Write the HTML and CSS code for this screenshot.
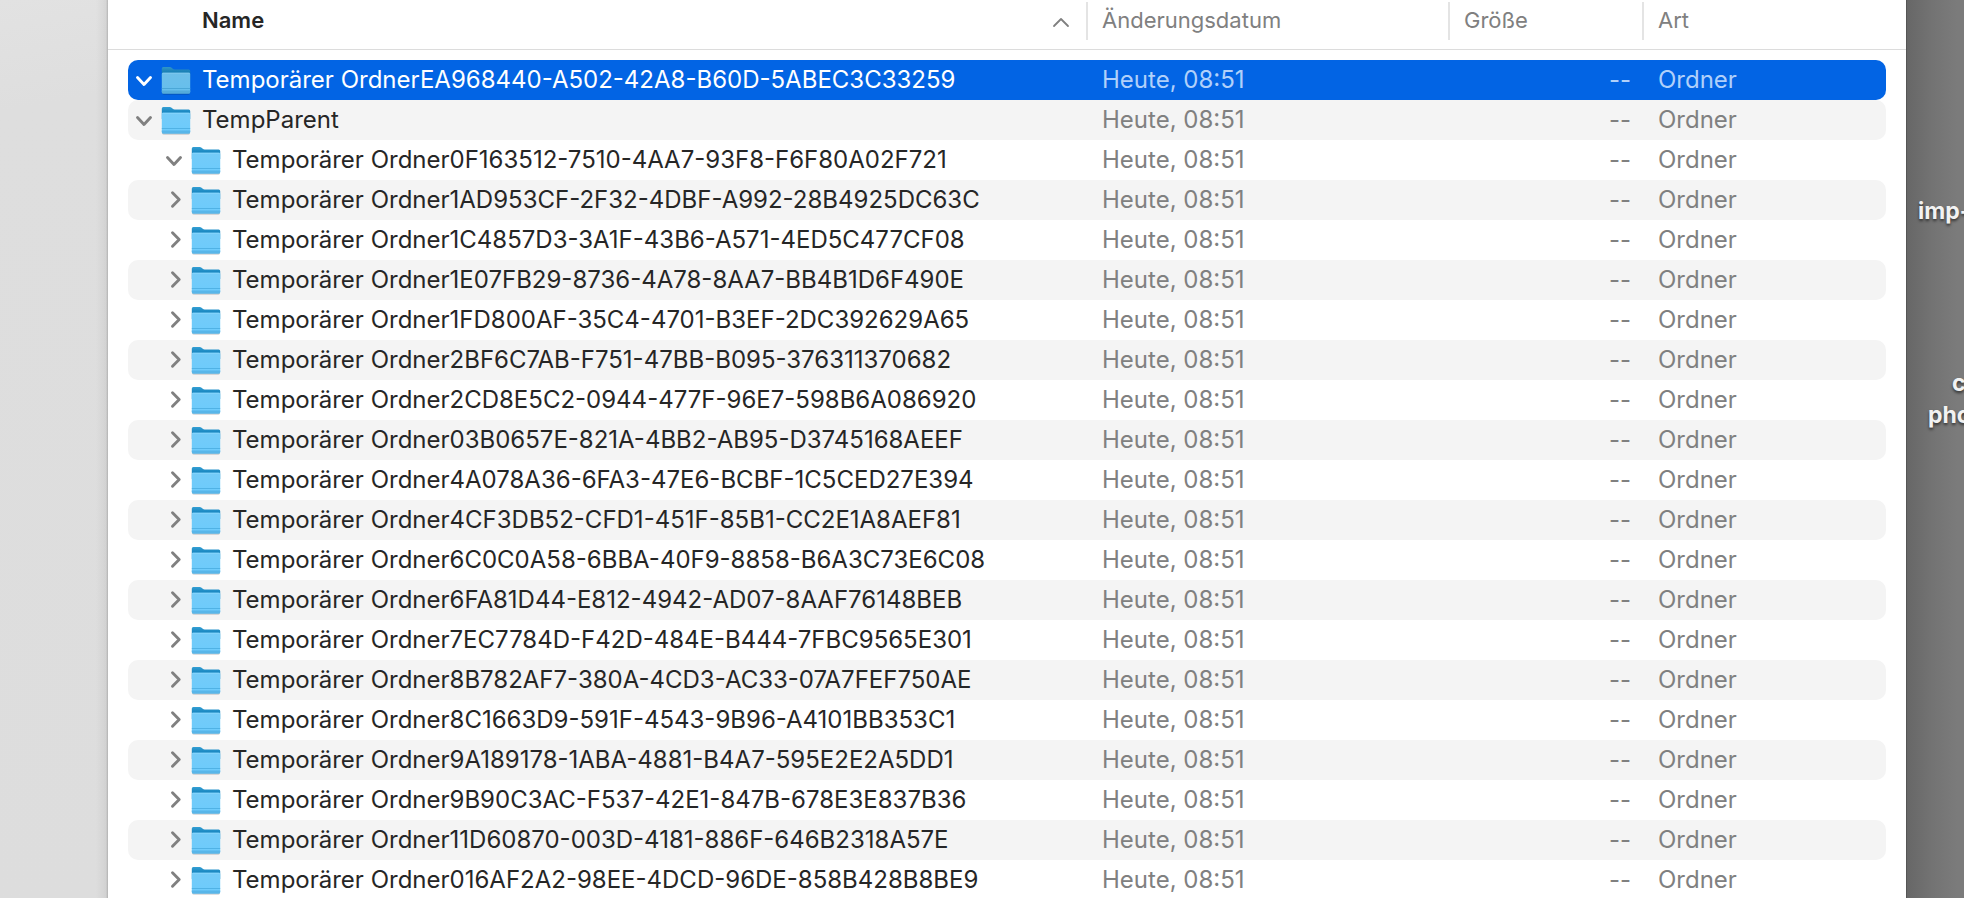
FILE: index.html
```html
<!DOCTYPE html>
<html lang="de">
<head>
  <meta charset="UTF-8">
  <meta name="viewport" content="width=device-width, initial-scale=1.0">
  <title>TempParent</title>
  <link rel="stylesheet" href="styles.css">
</head>
<body>
  <!-- shared icons -->
  <svg class="sprite" aria-hidden="true">
    <defs>
      <linearGradient id="folder-front" x1="0" y1="0" x2="0" y2="1">
        <stop offset="0" stop-color="#74cbf8"/>
        <stop offset="1" stop-color="#6ccbfc"/>
      </linearGradient>
      <linearGradient id="folder-back" x1="0" y1="0" x2="0" y2="1">
        <stop offset="0" stop-color="#349fd4"/>
        <stop offset=".5" stop-color="#1583bd"/>
      </linearGradient>
    </defs>
    <symbol id="folder" viewBox="0 0 30 30">
      <path d="M1.200 27h27.600v1a1.500 1.500 0 0 1-1.500 1.500H2.700A1.500 1.500 0 0 1 1.200 28z" fill="#000" opacity=".25"/>
      <path d="M.8 3.500A1.500 1.500 0 0 1 2.300 2h6.400c.8 0 1.300.3 1.900.8l1.200 1c.5.500 1.100.7 1.900.7h14a1.500 1.500 0 0 1 1.500 1.500V14H.8z" fill="url(#folder-back)"/>
      <path d="M.8 9a1.200 1.200 0 0 1 1.200-1.200h26A1.200 1.200 0 0 1 29.200 9v18a1.500 1.500 0 0 1-1.500 1.500H2.300A1.500 1.500 0 0 1 .8 27z" fill="url(#folder-front)"/>
      <path d="M1.500 8.200h27" stroke="#8fdaff" stroke-width=".8"/>
      <path d="M.8 23.500h28.400" stroke="#4dafe2" stroke-width=".9"/>
      <path d="M.8 25.500h28.400V27a1.500 1.500 0 0 1-1.500 1.500H2.300A1.500 1.500 0 0 1 .8 27z" fill="#58b6e9"/>
    </symbol>
    <symbol id="open" viewBox="0 0 20 20">
      <path d="M3.500 7.500 10 14.500 16.500 7.500" fill="none" stroke="currentColor" stroke-width="2.900" stroke-linecap="round" stroke-linejoin="round"/>
    </symbol>
    <symbol id="closed" viewBox="0 0 20 20">
      <path d="M8.500 2.800 15.200 9.500 8.500 16.200" fill="none" stroke="currentColor" stroke-width="2.900" stroke-linecap="round" stroke-linejoin="round"/>
    </symbol>
  </svg>

  <div class="backdrop"></div>

  <main class="window">
    <table class="files">
      <thead>
        <tr>
          <th class="name" aria-sort="ascending">Name
            <svg class="sort" viewBox="0 0 18 12" aria-hidden="true"><path d="M2 10 9 3 16 10" fill="none" stroke="currentColor" stroke-width="1.800" stroke-linecap="round" stroke-linejoin="round"/></svg>
          </th>
          <th>Änderungsdatum</th>
          <th>Größe</th>
          <th>Art</th>
        </tr>
      </thead>
      <tbody>
        <tr class="selected">
          <td class="name"><button aria-label="Zuklappen"><svg><use href="#open"/></svg></button><svg class="folder"><use href="#folder"/></svg><span>Temporärer OrdnerEA968440-A502-42A8-B60D-5ABEC3C33259</span></td>
          <td>Heute, 08:51</td><td class="size">--</td><td>Ordner</td>
        </tr>
        <tr>
          <td class="name"><button aria-label="Zuklappen"><svg><use href="#open"/></svg></button><svg class="folder"><use href="#folder"/></svg><span>TempParent</span></td>
          <td>Heute, 08:51</td><td class="size">--</td><td>Ordner</td>
        </tr>
        <tr class="child">
          <td class="name"><button aria-label="Zuklappen"><svg><use href="#open"/></svg></button><svg class="folder"><use href="#folder"/></svg><span>Temporärer Ordner0F163512-7510-4AA7-93F8-F6F80A02F721</span></td>
          <td>Heute, 08:51</td><td class="size">--</td><td>Ordner</td>
        </tr>
        <tr class="child">
          <td class="name"><button aria-label="Aufklappen"><svg><use href="#closed"/></svg></button><svg class="folder"><use href="#folder"/></svg><span>Temporärer Ordner1AD953CF-2F32-4DBF-A992-28B4925DC63C</span></td>
          <td>Heute, 08:51</td><td class="size">--</td><td>Ordner</td>
        </tr>
        <tr class="child">
          <td class="name"><button aria-label="Aufklappen"><svg><use href="#closed"/></svg></button><svg class="folder"><use href="#folder"/></svg><span>Temporärer Ordner1C4857D3-3A1F-43B6-A571-4ED5C477CF08</span></td>
          <td>Heute, 08:51</td><td class="size">--</td><td>Ordner</td>
        </tr>
        <tr class="child">
          <td class="name"><button aria-label="Aufklappen"><svg><use href="#closed"/></svg></button><svg class="folder"><use href="#folder"/></svg><span>Temporärer Ordner1E07FB29-8736-4A78-8AA7-BB4B1D6F490E</span></td>
          <td>Heute, 08:51</td><td class="size">--</td><td>Ordner</td>
        </tr>
        <tr class="child">
          <td class="name"><button aria-label="Aufklappen"><svg><use href="#closed"/></svg></button><svg class="folder"><use href="#folder"/></svg><span>Temporärer Ordner1FD800AF-35C4-4701-B3EF-2DC392629A65</span></td>
          <td>Heute, 08:51</td><td class="size">--</td><td>Ordner</td>
        </tr>
        <tr class="child">
          <td class="name"><button aria-label="Aufklappen"><svg><use href="#closed"/></svg></button><svg class="folder"><use href="#folder"/></svg><span>Temporärer Ordner2BF6C7AB-F751-47BB-B095-376311370682</span></td>
          <td>Heute, 08:51</td><td class="size">--</td><td>Ordner</td>
        </tr>
        <tr class="child">
          <td class="name"><button aria-label="Aufklappen"><svg><use href="#closed"/></svg></button><svg class="folder"><use href="#folder"/></svg><span>Temporärer Ordner2CD8E5C2-0944-477F-96E7-598B6A086920</span></td>
          <td>Heute, 08:51</td><td class="size">--</td><td>Ordner</td>
        </tr>
        <tr class="child">
          <td class="name"><button aria-label="Aufklappen"><svg><use href="#closed"/></svg></button><svg class="folder"><use href="#folder"/></svg><span>Temporärer Ordner03B0657E-821A-4BB2-AB95-D3745168AEEF</span></td>
          <td>Heute, 08:51</td><td class="size">--</td><td>Ordner</td>
        </tr>
        <tr class="child">
          <td class="name"><button aria-label="Aufklappen"><svg><use href="#closed"/></svg></button><svg class="folder"><use href="#folder"/></svg><span>Temporärer Ordner4A078A36-6FA3-47E6-BCBF-1C5CED27E394</span></td>
          <td>Heute, 08:51</td><td class="size">--</td><td>Ordner</td>
        </tr>
        <tr class="child">
          <td class="name"><button aria-label="Aufklappen"><svg><use href="#closed"/></svg></button><svg class="folder"><use href="#folder"/></svg><span>Temporärer Ordner4CF3DB52-CFD1-451F-85B1-CC2E1A8AEF81</span></td>
          <td>Heute, 08:51</td><td class="size">--</td><td>Ordner</td>
        </tr>
        <tr class="child">
          <td class="name"><button aria-label="Aufklappen"><svg><use href="#closed"/></svg></button><svg class="folder"><use href="#folder"/></svg><span>Temporärer Ordner6C0C0A58-6BBA-40F9-8858-B6A3C73E6C08</span></td>
          <td>Heute, 08:51</td><td class="size">--</td><td>Ordner</td>
        </tr>
        <tr class="child">
          <td class="name"><button aria-label="Aufklappen"><svg><use href="#closed"/></svg></button><svg class="folder"><use href="#folder"/></svg><span>Temporärer Ordner6FA81D44-E812-4942-AD07-8AAF76148BEB</span></td>
          <td>Heute, 08:51</td><td class="size">--</td><td>Ordner</td>
        </tr>
        <tr class="child">
          <td class="name"><button aria-label="Aufklappen"><svg><use href="#closed"/></svg></button><svg class="folder"><use href="#folder"/></svg><span>Temporärer Ordner7EC7784D-F42D-484E-B444-7FBC9565E301</span></td>
          <td>Heute, 08:51</td><td class="size">--</td><td>Ordner</td>
        </tr>
        <tr class="child">
          <td class="name"><button aria-label="Aufklappen"><svg><use href="#closed"/></svg></button><svg class="folder"><use href="#folder"/></svg><span>Temporärer Ordner8B782AF7-380A-4CD3-AC33-07A7FEF750AE</span></td>
          <td>Heute, 08:51</td><td class="size">--</td><td>Ordner</td>
        </tr>
        <tr class="child">
          <td class="name"><button aria-label="Aufklappen"><svg><use href="#closed"/></svg></button><svg class="folder"><use href="#folder"/></svg><span>Temporärer Ordner8C1663D9-591F-4543-9B96-A4101BB353C1</span></td>
          <td>Heute, 08:51</td><td class="size">--</td><td>Ordner</td>
        </tr>
        <tr class="child">
          <td class="name"><button aria-label="Aufklappen"><svg><use href="#closed"/></svg></button><svg class="folder"><use href="#folder"/></svg><span>Temporärer Ordner9A189178-1ABA-4881-B4A7-595E2E2A5DD1</span></td>
          <td>Heute, 08:51</td><td class="size">--</td><td>Ordner</td>
        </tr>
        <tr class="child">
          <td class="name"><button aria-label="Aufklappen"><svg><use href="#closed"/></svg></button><svg class="folder"><use href="#folder"/></svg><span>Temporärer Ordner9B90C3AC-F537-42E1-847B-678E3E837B36</span></td>
          <td>Heute, 08:51</td><td class="size">--</td><td>Ordner</td>
        </tr>
        <tr class="child">
          <td class="name"><button aria-label="Aufklappen"><svg><use href="#closed"/></svg></button><svg class="folder"><use href="#folder"/></svg><span>Temporärer Ordner11D60870-003D-4181-886F-646B2318A57E</span></td>
          <td>Heute, 08:51</td><td class="size">--</td><td>Ordner</td>
        </tr>
        <tr class="child">
          <td class="name"><button aria-label="Aufklappen"><svg><use href="#closed"/></svg></button><svg class="folder"><use href="#folder"/></svg><span>Temporärer Ordner016AF2A2-98EE-4DCD-96DE-858B428B8BE9</span></td>
          <td>Heute, 08:51</td><td class="size">--</td><td>Ordner</td>
        </tr>
      </tbody>
    </table>
  </main>

  <aside class="desktop">
    <p class="label label-import">imp-</p>
    <p class="label label-photo"><span>c</span>pho</p>
  </aside>
</body>
</html>
```
FILE: styles.css
```css
* {
  box-sizing: border-box;
}
body {
  margin: 0;
  height: 100vh;
  overflow: hidden;
  display: grid;
  grid-template-columns: 108px minmax(0, 1fr) 58px;
  font-family: Inter, "Liberation Sans", sans-serif;
  font-size: 24px;
  color: #262626;
}
.sprite {
  position: absolute;
  width: 0;
  height: 0;
}

/* desktop left and right of the window */
.backdrop {
  background:
    linear-gradient(to right, transparent 96px, rgba(0, 0, 0, 0.05) 106px, rgba(0, 0, 0, 0.2) 108px),
    linear-gradient(170deg, #e2e2e2, #dedede 110px, #dddddd);
}
.desktop {
  overflow: hidden;
  padding-top: 195px;
  border-left: 1px solid #555;
  background: linear-gradient(to right, #676767, #737373 25px, #7b7b7b 50px);
}
.label {
  margin: 0;
  font-size: 23px;
  font-weight: 700;
  line-height: 32px;
  white-space: nowrap;
  color: #f2f2f2;
  text-shadow: 0 2px 3px rgba(0, 0, 0, 0.6);
}
.label-import {
  padding-left: 11px;
}
.label-photo {
  padding-left: 21px;
  margin-top: 140px;
}
.label-photo span {
  display: block;
  padding-left: 24px;
}

/* file list */
.window {
  overflow: hidden;
  background: #fff;
}
.files,
.files thead,
.files tbody {
  display: block;
}
.files tr {
  display: grid;
  grid-template-columns: minmax(0, 1fr) 362px 194px 244px;
}
.files thead {
  padding: 2px 20px 9px;
  border-bottom: 1px solid #dcdcdc;
}
.files th {
  height: 38px;
  padding: 0 14px;
  border-left: 2px solid #e4e4e4;
  font-size: 22px;
  font-weight: 400;
  line-height: 36px;
  text-align: left;
  color: #808080;
}
.files th.name {
  display: flex;
  align-items: flex-start;
  justify-content: space-between;
  padding: 0 16px 0 74px;
  border-left: 0;
  font-weight: 600;
  color: #262626;
}
.sort {
  width: 18px;
  height: 12px;
  margin-top: 14px;
  color: #808080;
}
.files tbody {
  padding: 10px 20px 0;
}
.files tbody tr {
  height: 40px;
  border-radius: 10px;
}
.files tbody tr:nth-child(even) {
  background: #f4f4f4;
}
.files td {
  padding: 0 11px 0 16px;
  line-height: 40px;
  white-space: nowrap;
  color: #808080;
}
.files td.name {
  display: flex;
  align-items: center;
  padding: 0 0 0 6px;
  color: #262626;
}
.files .child .name {
  padding-left: 36px;
}
.files td.size {
  text-align: right;
}
.files button {
  width: 20px;
  height: 20px;
  margin-right: 7px;
  padding: 0;
  border: 0;
  background: none;
  color: #808080;
}
.files button svg {
  display: block;
  width: 20px;
  height: 20px;
}
.folder {
  width: 30px;
  height: 30px;
  margin-right: 11px;
}
.files .selected {
  background: #0264e4;
}
.files .selected td {
  color: #b0d0fa;
}
.files .selected .name,
.files .selected button {
  color: #fff;
}
.selected .folder {
  filter: brightness(0.94);
}
```
